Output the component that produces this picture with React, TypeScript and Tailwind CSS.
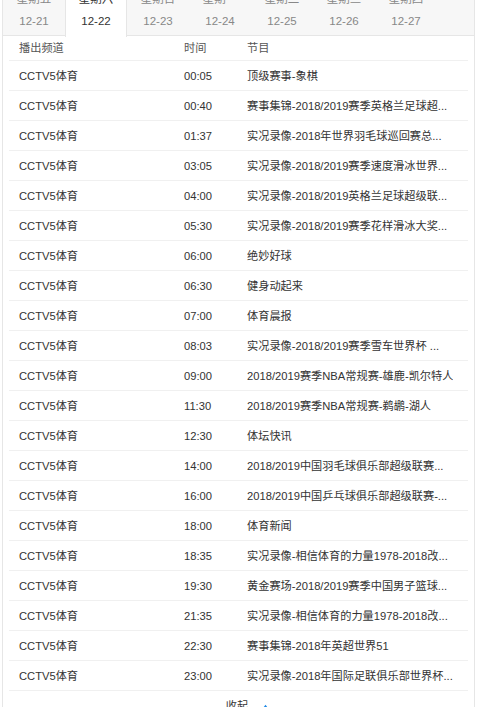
import React from "react";

const tabs = [
  { day: "星期五", date: "12-21" },
  { day: "星期六", date: "12-22" },
  { day: "星期日", date: "12-23" },
  { day: "星期一", date: "12-24" },
  { day: "星期二", date: "12-25" },
  { day: "星期三", date: "12-26" },
  { day: "星期四", date: "12-27" },
];

const rows = [
  ["00:05", "顶级赛事-象棋"],
  ["00:40", "赛事集锦-2018/2019赛季英格兰足球超..."],
  ["01:37", "实况录像-2018年世界羽毛球巡回赛总..."],
  ["03:05", "实况录像-2018/2019赛季速度滑冰世界..."],
  ["04:00", "实况录像-2018/2019英格兰足球超级联..."],
  ["05:30", "实况录像-2018/2019赛季花样滑冰大奖..."],
  ["06:00", "绝妙好球"],
  ["06:30", "健身动起来"],
  ["07:00", "体育晨报"],
  ["08:03", "实况录像-2018/2019赛季雪车世界杯 ..."],
  ["09:00", "2018/2019赛季NBA常规赛-雄鹿-凯尔特人"],
  ["11:30", "2018/2019赛季NBA常规赛-鹈鹕-湖人"],
  ["12:30", "体坛快讯"],
  ["14:00", "2018/2019中国羽毛球俱乐部超级联赛..."],
  ["16:00", "2018/2019中国乒乓球俱乐部超级联赛-..."],
  ["18:00", "体育新闻"],
  ["18:35", "实况录像-相信体育的力量1978-2018改..."],
  ["19:30", "黄金赛场-2018/2019赛季中国男子篮球..."],
  ["21:35", "实况录像-相信体育的力量1978-2018改..."],
  ["22:30", "赛事集锦-2018年英超世界51"],
  ["23:00", "实况录像-2018年国际足联俱乐部世界杯..."],
];

export default function App() {
  return (
    <div
      className="h-[707px] overflow-hidden bg-white pl-[2px] text-[11.2px] text-[#333]"
      style={{ fontFamily: '"Liberation Sans", "Noto Sans CJK SC", sans-serif' }}
    >
      <div className="-mt-[12px] w-[473px] border-x border-[#e6e6e6]">
        {/* date tabs */}
        <div className="flex h-[48px] border-b border-[#e6e6e6] bg-[#f7f7f7] text-[11.5px]">
          {tabs.map((t, i) => {
            const active = i === 1;
            return (
              <div
                key={t.date}
                className={`flex w-[62px] shrink-0 flex-col items-center ${
                  active
                    ? "-mb-px h-[49px] border-x border-[#e6e6e6] bg-white text-[#333]"
                    : "text-[#888]"
                }`}
              >
                <span className="leading-[22px]">{t.day}</span>
                <span className="leading-[22px]">{t.date}</span>
              </div>
            );
          })}
        </div>

        {/* header */}
        <div className="mx-[6px] flex h-[25px] items-center border-b border-[#f0f0f0] px-[10px] text-[#555]">
          <span className="w-[165px] shrink-0">播出频道</span>
          <span className="w-[63px] shrink-0">时间</span>
          <span>节目</span>
        </div>

        {rows.map(([time, name]) => (
          <div
            key={time}
            className="mx-[6px] flex h-[30px] items-center border-b border-[#f0f0f0] px-[10px] pt-[2px]"
          >
            <span className="w-[165px] shrink-0">CCTV5体育</span>
            <span className="w-[63px] shrink-0">{time}</span>
            <span className="min-w-0 truncate">{name}</span>
          </div>
        ))}

        <div className="flex h-[30px] items-center justify-center gap-[14px] pl-[18px] text-[#333]">
          <span>收起</span>
          <svg width="7" height="5" viewBox="0 0 8 6" className="text-[#1e88e5]">
            <path d="M0 6 L4 1 L8 6 Z" fill="currentColor" />
          </svg>
        </div>
      </div>
    </div>
  );
}
